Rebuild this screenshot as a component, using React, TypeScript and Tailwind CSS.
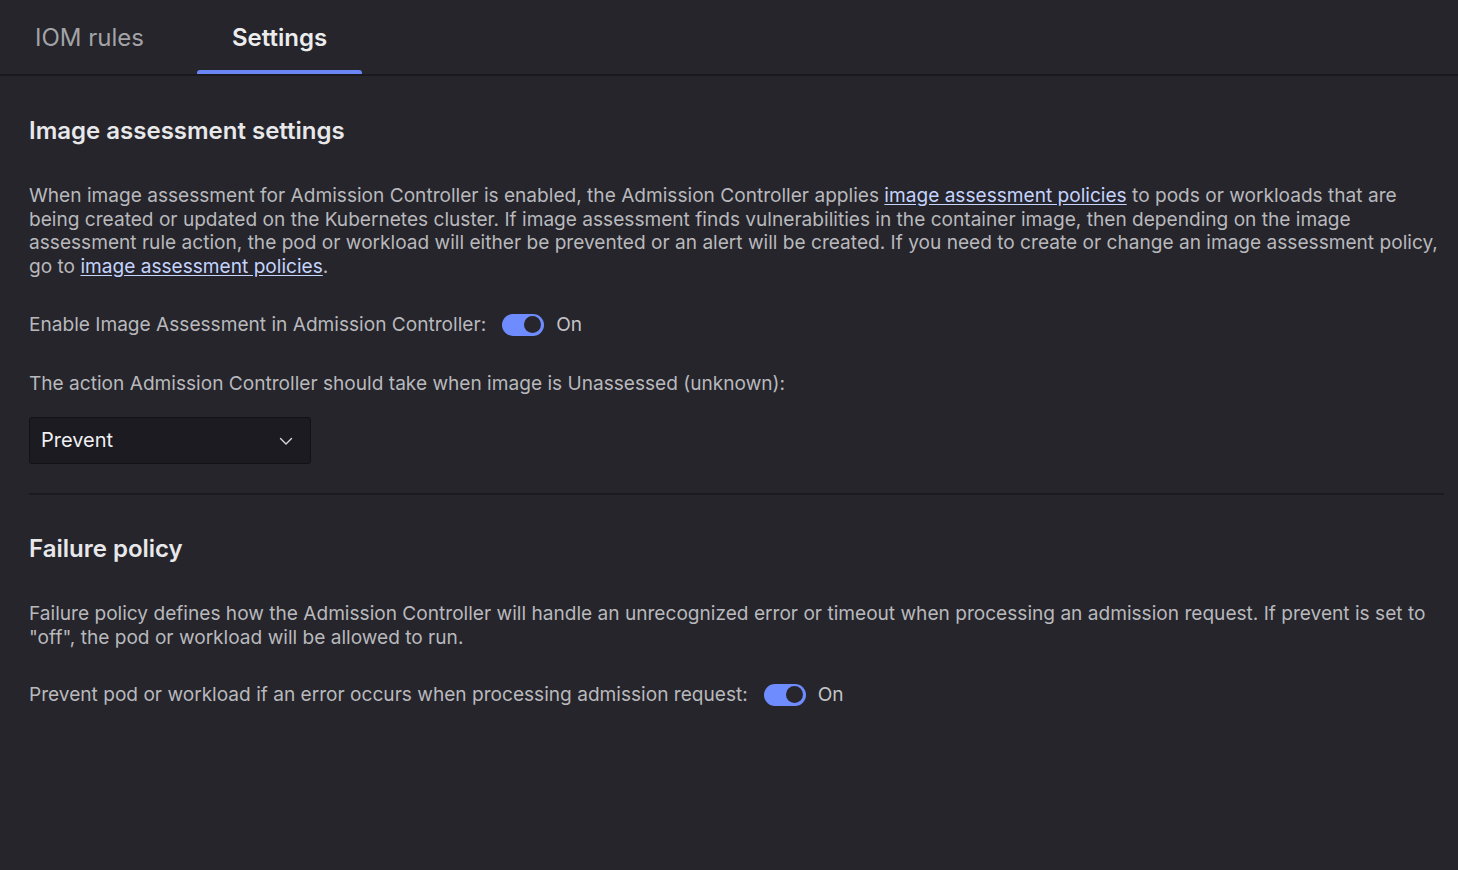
import React from "react";

function Toggle() {
  return (
    <div className="flex items-center gap-3">
      <div className="w-[42px] h-[22px] rounded-full bg-[#6f8cff] flex items-center justify-end pr-[3px]">
        <div className="w-[17px] h-[17px] rounded-full bg-[#26262c]" />
      </div>
      <span className="text-[#c4c4c8]">On</span>
    </div>
  );
}

export default function App() {
  return (
    <div
      className="w-[1458px] h-[870px] bg-[#25252b] text-[#b9b9bd] text-[19.1px] leading-[23.5px] overflow-hidden"
      style={{ fontFamily: "Inter, 'Noto Sans', sans-serif" }}
    >
      <div className="flex h-[76px] border-b-2 border-[#1a1a1e]">
        <div className="px-[35px] flex items-center text-[24px] text-[#a3a3a7] pt-[2px]">IOM rules</div>
        <div className="ml-[18px] px-[35px] relative flex items-center text-[24px] font-semibold text-[#ececee] pt-[2px]">
          Settings
          <div className="absolute left-0 right-0 bottom-0 h-[4px] rounded-t-[3px] bg-[#6a86f4]" />
        </div>
      </div>
      <div className="px-[29px] pr-[14px]">
        <h2 className="mt-[40px] text-[24px] leading-[30px] font-semibold text-[#e8e8ea]">Image assessment settings</h2>
        <p className="mt-[38px]">
          When image assessment for Admission Controller is enabled, the Admission Controller applies{" "}
          <a className="text-[#c5d4ff] underline underline-offset-2">image assessment policies</a> to pods or workloads that are
          being created or updated on the Kubernetes cluster. If image assessment finds vulnerabilities in the container image, then depending on the image
          assessment rule action, the pod or workload will either be prevented or an alert will be created. If you need to create or change an image assessment policy,
          go to <a className="text-[#c5d4ff] underline underline-offset-2">image assessment policies</a>.
        </p>
        <div className="mt-[35px] flex items-center gap-[16px]">
          <span>Enable Image Assessment in Admission Controller:</span>
          <Toggle />
        </div>
        <p className="mt-[35px]">The action Admission Controller should take when image is Unassessed (unknown):</p>
        <div className="mt-[22px] w-[282px] h-[47px] rounded-[3px] bg-[#1c1b21] border border-[#121215] flex items-center justify-between px-[11px]">
          <span className="text-[#f0f0f2] text-[20px]">Prevent</span>
          <svg width="18" height="18" viewBox="0 0 18 18" fill="none" className="mr-[4px]">
            <path d="M3.5 6.5l5.5 5.5 5.5-5.5" stroke="#d8d8dc" strokeWidth="1.4" strokeLinecap="round" strokeLinejoin="round" />
          </svg>
        </div>
        <div className="mt-[29px] h-[2px] bg-[#1b1b1f]" />
        <h2 className="mt-[39px] text-[24px] leading-[30px] font-semibold text-[#e8e8ea]">Failure policy</h2>
        <p className="mt-[38px]">
          Failure policy defines how the Admission Controller will handle an unrecognized error or timeout when processing an admission request. If prevent is set to
          "off", the pod or workload will be allowed to run.
        </p>
        <div className="mt-[34px] flex items-center gap-[16px]">
          <span>Prevent pod or workload if an error occurs when processing admission request:</span>
          <Toggle />
        </div>
      </div>
    </div>
  );
}
